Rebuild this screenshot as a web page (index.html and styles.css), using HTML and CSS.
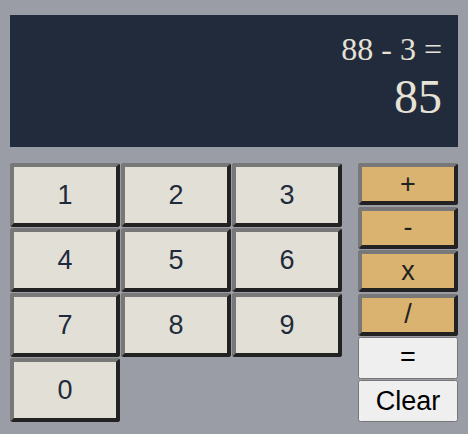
FILE: index.html
```html
<!DOCTYPE html>
<html>
<head>
<meta charset="utf-8">
<link rel="stylesheet" href="styles.css">
</head>
<body>
<div class="calc">
  <div class="display">
    <div class="expr">88 - 3 =</div>
    <div class="result">85</div>
  </div>
  <div class="keys">
    <div class="numbers">
      <button class="btn num">1</button>
      <button class="btn num">2</button>
      <button class="btn num">3</button>
      <button class="btn num">4</button>
      <button class="btn num">5</button>
      <button class="btn num">6</button>
      <button class="btn num">7</button>
      <button class="btn num">8</button>
      <button class="btn num">9</button>
      <button class="btn num">0</button>
    </div>
    <div class="ops">
      <button class="btn op">+</button>
      <button class="btn op">-</button>
      <button class="btn op">x</button>
      <button class="btn op">/</button>
      <button class="plain">=</button>
      <button class="plain">Clear</button>
    </div>
  </div>
</div>
</body>
</html>
```

FILE: styles.css
```css
html, body {
  margin: 0;
  padding: 0;
  background: #9a9da6;
}
body {
  padding: 15px 10px 0 10px;
}
.calc {
  width: 448px;
}
.display {
  box-sizing: border-box;
  height: 132px;
  background: #222b3c;
  color: #e6e2d6;
  font-family: "Liberation Serif", "Times New Roman", serif;
  text-align: right;
  padding: 16px 16px 0 16px;
}
.expr {
  font-size: 32px;
  line-height: 37px;
}
.result {
  font-size: 48px;
  line-height: 55px;
  margin-top: 1px;
}
.keys {
  display: flex;
  gap: 16px;
  margin-top: 16px;
  height: 259px;
}
.numbers {
  width: 332px;
  display: grid;
  grid-template-columns: repeat(3, 110px);
  grid-template-rows: repeat(4, 64px);
  gap: 1px;
}
.ops {
  width: 100px;
  display: flex;
  flex-direction: column;
  gap: 1.5px;
}
.btn {
  box-sizing: border-box;
  margin: 0;
  padding: 0;
  border-style: solid;
  border-width: 4px;
  border-color: #787878 #222222 #222222 #787878;
  border-radius: 3px;
  font-family: "Liberation Sans", Arial, sans-serif;
  font-size: 27px;
  color: #1f2a3c;
}
.num {
  background: #e2e0d6;
}
.op {
  height: 42px;
  flex: none;
  background: #d9b36f;
  color: #222222;
}
.plain {
  flex: 1;
  margin: 0;
  font-family: "Liberation Sans", Arial, sans-serif;
  font-size: 27px;
  color: #000000;
}
```
